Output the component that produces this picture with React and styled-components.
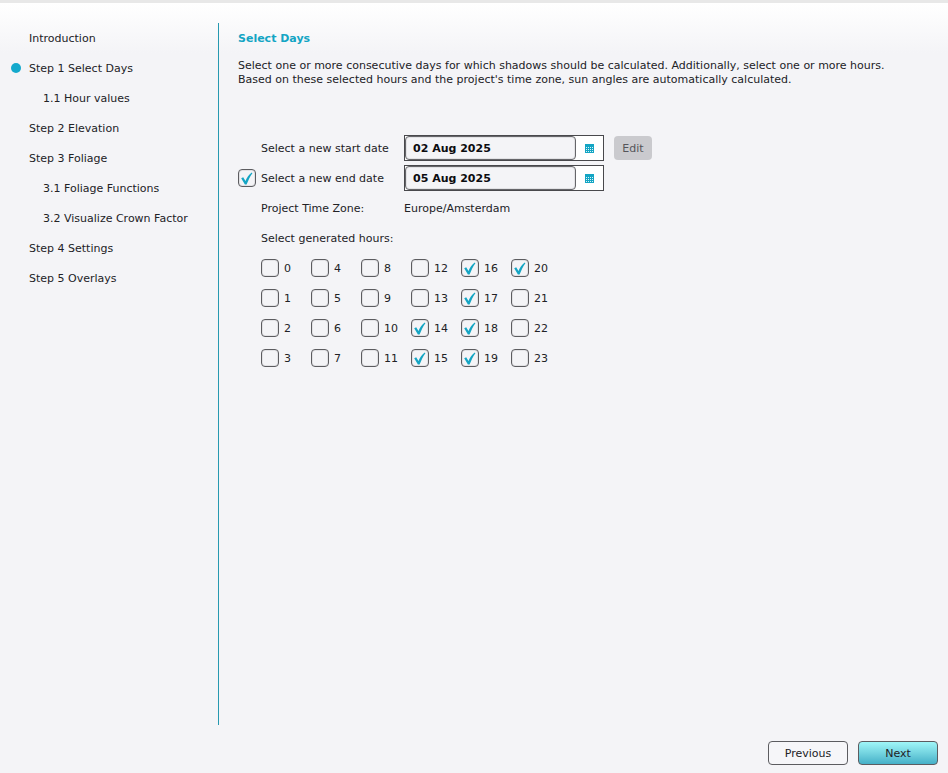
import React, { useState } from "react";
import styled, { createGlobalStyle } from "styled-components";

const steps = [
  { title: "Introduction" },
  { title: "Step 1 Select Days", active: true },
  { title: "1.1 Hour values", sub: true },
  { title: "Step 2 Elevation" },
  { title: "Step 3 Foliage" },
  { title: "3.1 Foliage Functions", sub: true },
  { title: "3.2 Visualize Crown Factor", sub: true },
  { title: "Step 4 Settings" },
  { title: "Step 5 Overlays" },
];

const hours = Array.from({ length: 24 }, (_, i) => i);

function CheckBox(props) {
  return (
    <CheckWrap>
      <CheckInput type="checkbox" {...props} />
      <CheckMark viewBox="0 0 18 18" aria-hidden="true">
        <path d="M3.2 9.2 L5.2 8.3 L7.5 12 C8.9 8.6 10.8 5.6 13.8 3.6 L14.4 4.2 C11.9 7.4 10.4 11 8.6 15.6 L6.9 15.6 Z" />
      </CheckMark>
    </CheckWrap>
  );
}

function CalendarIcon() {
  return (
    <svg width="9" height="9" viewBox="0 0 9 9" shapeRendering="crispEdges" aria-hidden="true">
      <rect width="9" height="9" fill="#14a5c4" />
      {[3, 5, 7].map((y) =>
        [1, 3, 5, 7].map((x) => (
          <rect key={`${x}-${y}`} x={x} y={y} width="1" height="1" fill="#dcf4f8" />
        ))
      )}
    </svg>
  );
}

function DateField({ id, value, onChange }) {
  return (
    <DateBox>
      <DateInput id={id} type="text" value={value} onChange={(e) => onChange(e.target.value)} />
      <CalendarButton type="button" aria-label="Pick a date">
        <CalendarIcon />
      </CalendarButton>
    </DateBox>
  );
}

export default function App() {
  const [start, setStart] = useState("02 Aug 2025");
  const [end, setEnd] = useState("05 Aug 2025");
  const [useEnd, setUseEnd] = useState(true);
  const [selected, setSelected] = useState([14, 15, 16, 17, 18, 19, 20]);

  const toggleHour = (hour) => {
    setSelected(
      selected.includes(hour) ? selected.filter((h) => h !== hour) : [...selected, hour]
    );
  };

  return (
    <Wizard>
      <GlobalStyle />
      <Body>
        <Sidebar>
          <StepList>
            {steps.map((step) => (
              <Step key={step.title}>
                <Marker $active={step.active} />
                <StepLink href="#" $sub={step.sub} aria-current={step.active ? "step" : undefined}>
                  {step.title}
                </StepLink>
              </Step>
            ))}
          </StepList>
        </Sidebar>
        <Content>
          <Title>Select Days</Title>
          <Description>
            Select one or more consecutive days for which shadows should be calculated.
            Additionally, select one or more hours. Based on these selected hours and the
            project's time zone, sun angles are automatically calculated.
          </Description>
          <Row>
            <span />
            <Text as="label" htmlFor="start-date">Select a new start date</Text>
            <Controls>
              <DateField id="start-date" value={start} onChange={setStart} />
              <EditButton type="button" disabled>Edit</EditButton>
            </Controls>
          </Row>
          <Row>
            <CheckBox id="use-end" checked={useEnd} onChange={() => setUseEnd(!useEnd)} />
            <Text as="label" htmlFor="use-end">Select a new end date</Text>
            <Controls>
              <DateField id="end-date" value={end} onChange={setEnd} />
            </Controls>
          </Row>
          <Row>
            <span />
            <Text>Project Time Zone:</Text>
            <Text>Europe/Amsterdam</Text>
          </Row>
          <HourSet>
            <HourLegend>Select generated hours:</HourLegend>
            <HourGrid>
              {hours.map((hour) => (
                <HourLabel key={hour}>
                  <CheckBox checked={selected.includes(hour)} onChange={() => toggleHour(hour)} />
                  <Text>{hour}</Text>
                </HourLabel>
              ))}
            </HourGrid>
          </HourSet>
        </Content>
      </Body>
      <Footer>
        <FooterButton type="button">Previous</FooterButton>
        <FooterButton type="button" $primary>Next</FooterButton>
      </Footer>
    </Wizard>
  );
}

const GlobalStyle = createGlobalStyle`
  *, *::before, *::after {
    box-sizing: border-box;
  }
  body {
    margin: 0;
    background: #f4f4f7;
  }
  body, button, input {
    font-family: "DejaVu Sans", Verdana, sans-serif;
    font-size: 11px;
    line-height: 14px;
    color: #222226;
  }
`;

const Wizard = styled.div`
  min-height: 100vh;
  display: flex;
  flex-direction: column;
  padding-top: 20px;
  border-top: 3px solid #e8e8e8;
  background: linear-gradient(#ffffff, #f4f4f7 50px);
`;

const Body = styled.div`
  flex: 1;
  display: flex;
`;

const Sidebar = styled.nav`
  flex: 0 0 219px;
  border-right: 1px solid #2699b0;
`;

const StepList = styled.ul`
  margin: 0;
  padding: 0 0 0 11px;
  list-style: none;
`;

const Step = styled.li`
  display: flex;
  align-items: center;
  gap: 8px;
  height: 30px;
`;

const Marker = styled.span`
  width: 10px;
  height: 10px;
  border-radius: 50%;
  background: ${({ $active }) => ($active ? "#14a9cc" : "transparent")};
`;

const Text = styled.span`
  padding-top: 2px;
`;

const StepLink = styled.a`
  padding-top: 2px;
  padding-left: ${({ $sub }) => ($sub ? "14px" : "0")};
  color: inherit;
  text-decoration: none;
`;

const Content = styled.main`
  flex: 1;
  padding: 0 10px 0 19px;
`;

const Title = styled.h1`
  margin: 0 0 4px;
  font-size: 11px;
  line-height: 32px;
  color: #14a5c4;
`;

const Description = styled.p`
  max-width: 680px;
  margin: 0 0 46px;
`;

const Row = styled.div`
  display: grid;
  grid-template-columns: 23px 143px 1fr;
  align-items: center;
  height: 30px;
`;

const Controls = styled.div`
  display: flex;
  align-items: center;
  gap: 10px;
`;

const DateBox = styled.div`
  display: flex;
  width: 200px;
  height: 26px;
  border: 1px solid #48484c;
  background: #fff;
`;

const DateInput = styled.input`
  flex: 1;
  min-width: 0;
  padding: 2px 7px 0;
  border: 1px solid #66666a;
  border-radius: 4px;
  background: #f4f4f7;
  box-shadow: inset 0 0 0 1px #e2e2e5;
  font-weight: bold;
  color: #0c0c10;
`;

const CalendarButton = styled.button`
  display: flex;
  align-items: center;
  justify-content: center;
  width: 27px;
  padding: 0;
  border: 0;
  background: none;
`;

const EditButton = styled.button`
  width: 38px;
  height: 24px;
  padding: 2px 0 0;
  border: 0;
  border-radius: 4px;
  background: #cacace;
  color: #55555a;
`;

const CheckWrap = styled.span`
  display: grid;
  width: 18px;
  height: 18px;
`;

const CheckMark = styled.svg`
  grid-area: 1 / 1;
  width: 18px;
  height: 18px;
  fill: #14a5c4;
  visibility: hidden;
  pointer-events: none;
`;

const CheckInput = styled.input`
  grid-area: 1 / 1;
  appearance: none;
  width: 18px;
  height: 18px;
  margin: 0;
  border: 1px solid #5c5c60;
  border-radius: 4px;
  background: #f4f4f7;
  box-shadow: inset 0 0 0 1px #e2e2e5;

  &:checked + ${CheckMark} {
    visibility: visible;
  }
`;

const HourSet = styled.fieldset`
  min-width: 0;
  margin: 0;
  padding: 0 0 0 23px;
  border: 0;
`;

const HourLegend = styled.legend`
  height: 30px;
  padding: 0;
  line-height: 32px;
`;

const HourGrid = styled.div`
  display: grid;
  grid-template-rows: repeat(4, 30px);
  grid-auto-columns: 50px;
  grid-auto-flow: column;
`;

const HourLabel = styled.label`
  display: flex;
  align-items: center;
  gap: 5px;
`;

const Footer = styled.footer`
  display: flex;
  justify-content: flex-end;
  gap: 10px;
  padding: 16px 10px 8px;
`;

const FooterButton = styled.button`
  width: 80px;
  height: 24px;
  padding: 2px 0 0;
  border: 1px solid #5c5c60;
  border-radius: 4px;
  background: ${({ $primary }) =>
    $primary ? "linear-gradient(#9ff6f8, #74d4e0 50%, #45b0c8)" : "#f6f6f9"};
`;
